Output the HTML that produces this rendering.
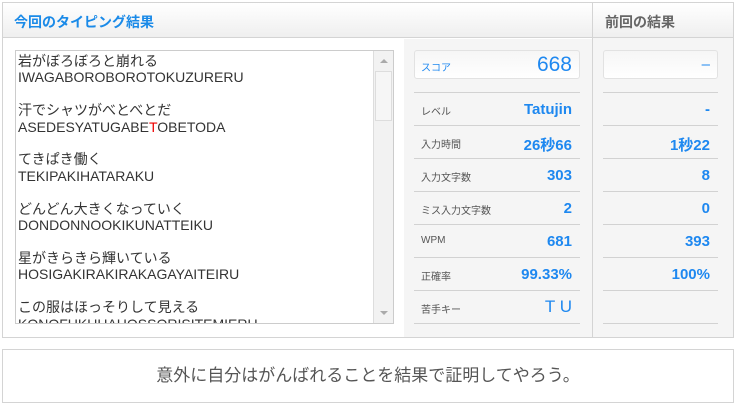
<!DOCTYPE html>
<html><head><meta charset="utf-8"><style>
*{box-sizing:border-box;margin:0;padding:0}
body{width:736px;height:406px;background:#fff;font-family:"Liberation Sans","Noto Sans CJK JP",sans-serif;position:relative;overflow:hidden}
.outer{position:absolute;left:2px;top:2px;width:732px;height:336px;border:1px solid #d4d4d4;background:#fff}
.hdr{position:absolute;left:0;top:0;width:730px;height:35px;background:linear-gradient(#fff,#efefef);border-bottom:1px solid #d4d4d4}
.hdr .t1{position:absolute;left:11px;top:9px;font-size:14px;font-weight:bold;color:#1a8ae8}
.hdr .t2{position:absolute;left:602px;top:9px;font-size:14px;font-weight:bold;color:#666}
.mid{position:absolute;left:401px;top:36px;width:188px;height:298px;background:#f5f5f5}
.right{position:absolute;left:589px;top:0;width:141px;height:334px;background:#f5f5f5;border-left:1px solid #d4d4d4}
.ta{position:absolute;left:15px;top:50px;width:379px;height:274px;border:1px solid #ccc;background:#fff;overflow:hidden}
.ta .txt{position:absolute;left:2px;top:2px;font-size:14px;line-height:16.4px;color:#333;white-space:pre}
.sb{position:absolute;right:0;top:0;width:20px;height:272px;background:#f2f2f2;border-left:1px solid #ddd}
.thumb{position:absolute;left:1px;top:20px;width:17px;height:50px;background:#f6f6f6;border:1px solid #ddd}
.ar{position:absolute;left:6px;width:0;height:0;border-left:4px solid transparent;border-right:4px solid transparent}
.box{position:absolute;height:29px;border:1px solid #e2e2e2;border-radius:3px;background:linear-gradient(#f6f6f6,#fff)}
.line{position:absolute;height:1px;background:#d2d2d2}
.lbl{position:absolute;font-size:10px;color:#555}
.val{position:absolute;text-align:right;font-size:15px;color:#1e88f0;font-weight:bold}
.bot{position:absolute;left:2px;top:349px;width:732px;height:54px;border:1px solid #d4d4d4;text-align:center;font-size:17px;line-height:52px;color:#555}
</style></head><body>
<div class="outer">
<div class="mid"></div>
<div class="right"></div>
<div class="hdr"><span class="t1">今回のタイピング結果</span><span class="t2">前回の結果</span><div style="position:absolute;left:589px;top:0;width:1px;height:35px;background:#d4d4d4"></div></div>
</div>
<div class="ta"><div class="txt">岩がぼろぼろと崩れる
IWAGABOROBOROTOKUZURERU

汗でシャツがべとべとだ
ASEDESYATUGABE<span style="color:#e00">T</span>OBETODA

てきぱき働く
TEKIPAKIHATARAKU

どんどん大きくなっていく
DONDONNOOKIKUNATTEIKU

星がきらきら輝いている
HOSIGAKIRAKIRAKAGAYAITEIRU

この服はほっそりして見える
KONOFUKUHAHOSSORISITEMIERU</div>
<div class="sb"><div class="ar" style="top:8px;border-bottom:4px solid #aaa"></div><div class="thumb"></div><div class="ar" style="top:260px;border-top:4px solid #aaa"></div></div></div>

<div class="box" style="left:414px;top:50px;width:166px"></div>
<div class="box" style="left:603px;top:50px;width:115px"></div>
<span class="lbl" style="left:421px;top:59px;color:#1e88f0">スコア</span>
<span class="val" style="left:480px;top:53px;width:92px;font-size:21px;font-weight:normal">668</span>
<span class="val" style="left:640px;top:56px;width:70px;font-weight:normal">–</span>

<div class="line" style="left:414px;top:92px;width:166px"></div><div class="line" style="left:603px;top:92px;width:115px"></div>
<div class="line" style="left:414px;top:125px;width:166px"></div><div class="line" style="left:603px;top:125px;width:115px"></div>
<div class="line" style="left:414px;top:158px;width:166px"></div><div class="line" style="left:603px;top:158px;width:115px"></div>
<div class="line" style="left:414px;top:191px;width:166px"></div><div class="line" style="left:603px;top:191px;width:115px"></div>
<div class="line" style="left:414px;top:224px;width:166px"></div><div class="line" style="left:603px;top:224px;width:115px"></div>
<div class="line" style="left:414px;top:257px;width:166px"></div><div class="line" style="left:603px;top:257px;width:115px"></div>
<div class="line" style="left:414px;top:290px;width:166px"></div><div class="line" style="left:603px;top:290px;width:115px"></div>
<div class="line" style="left:414px;top:323px;width:166px"></div><div class="line" style="left:603px;top:323px;width:115px"></div>

<span class="lbl" style="left:421px;top:103px">レベル</span><span class="val" style="left:480px;top:101px;width:92px">Tatujin</span><span class="val" style="left:640px;top:101px;width:70px">-</span>
<span class="lbl" style="left:421px;top:136px">入力時間</span><span class="val" style="left:480px;top:134px;width:92px">26秒66</span><span class="val" style="left:620px;top:134px;width:90px">1秒22</span>
<span class="lbl" style="left:421px;top:169px">入力文字数</span><span class="val" style="left:480px;top:167px;width:92px">303</span><span class="val" style="left:640px;top:167px;width:70px">8</span>
<span class="lbl" style="left:421px;top:202px">ミス入力文字数</span><span class="val" style="left:480px;top:200px;width:92px">2</span><span class="val" style="left:640px;top:200px;width:70px">0</span>
<span class="lbl" style="left:421px;top:235px">WPM</span><span class="val" style="left:480px;top:233px;width:92px">681</span><span class="val" style="left:640px;top:233px;width:70px">393</span>
<span class="lbl" style="left:421px;top:268px">正確率</span><span class="val" style="left:460px;top:266px;width:112px">99.33%</span><span class="val" style="left:620px;top:266px;width:90px">100%</span>
<span class="lbl" style="left:421px;top:301px">苦手キー</span><span class="val" style="left:480px;top:297px;width:92px;font-weight:normal;font-size:17px">T U</span>

<div class="bot">意外に自分はがんばれることを結果で証明してやろう。</div>
</body></html>
